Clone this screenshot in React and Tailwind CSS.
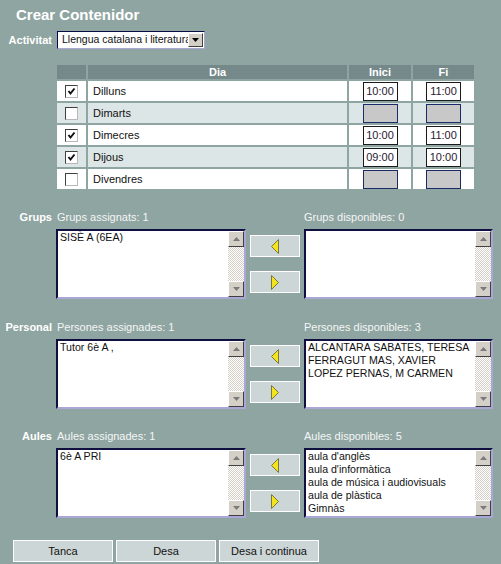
import React from "react"

const days = [
  { name: "Dilluns", on: true, start: "10:00", end: "11:00" },
  { name: "Dimarts", on: false },
  { name: "Dimecres", on: true, start: "10:00", end: "11:00" },
  { name: "Dijous", on: true, start: "09:00", end: "10:00" },
  { name: "Divendres", on: false },
]

const sections = [
  {
    label: "Grups",
    left: "Grups assignats: 1",
    right: "Grups disponibles: 0",
    assigned: ["SISÈ A (6EA)"],
    available: [],
    mt: "mt-[22px]",
  },
  {
    label: "Personal",
    left: "Persones assignades: 1",
    right: "Persones disponibles: 3",
    assigned: ["Tutor 6è A ,"],
    available: ["ALCANTARA SABATES, TERESA", "FERRAGUT MAS, XAVIER", "LOPEZ PERNAS, M CARMEN"],
    mt: "mt-[22px]",
  },
  {
    label: "Aules",
    left: "Aules assignades: 1",
    right: "Aules disponibles: 5",
    assigned: ["6è A PRI"],
    available: ["aula d'anglès", "aula d'informàtica", "aula de música i audiovisuals", "aula de plàstica", "Gimnàs"],
    mt: "mt-[21px]",
  },
]

function ScrollButton({ up }) {
  return (
    <div className="w-[16px] h-[16px] bg-[#d4d0c8] border border-t-white border-l-white border-b-[#404040] border-r-[#404040] flex items-center justify-center">
      <svg width="7" height="4" viewBox="0 0 7 4">
        {up ? <polygon points="3.5,0 7,4 0,4" fill="#7a7a7a" /> : <polygon points="0,0 7,0 3.5,4" fill="#7a7a7a" />}
      </svg>
    </div>
  )
}

function Listbox({ items }) {
  return (
    <div className="h-[70px] bg-white border-2 border-t-[#101040] border-l-[#101040] border-b-[#aaa6d6] border-r-[#aaa6d6] flex">
      <div className="flex-1 min-w-0 pl-[2px] text-[10.6px] leading-[13px] text-[#111] overflow-hidden whitespace-nowrap">
        {items.map((it) => (
          <div key={it}>{it}</div>
        ))}
      </div>
      <div className="w-[16px] flex flex-col">
        <ScrollButton up />
        <div className="flex-1 bg-[repeating-conic-gradient(#d4d0c8_0_25%,#ffffff_0_50%)] bg-size-[2px_2px]" />
        <ScrollButton />
      </div>
    </div>
  )
}

function ArrowButton({ left }) {
  return (
    <button className="w-[50px] h-[22px] bg-[#cdd6d6] border border-white flex items-center justify-center">
      <svg width="8" height="15" viewBox="0 0 8 15">
        {left ? (
          <polygon points="7.5,0.5 0.5,7.5 7.5,14.5" fill="#f4e41c" stroke="#7c7838" strokeWidth="1" />
        ) : (
          <polygon points="0.5,0.5 7.5,7.5 0.5,14.5" fill="#f4e41c" stroke="#7c7838" strokeWidth="1" />
        )}
      </svg>
    </button>
  )
}

function Checkbox({ on }) {
  return (
    <div className="w-[13px] h-[13px] bg-white border border-t-[#404040] border-l-[#404040] border-b-[#b8b8b8] border-r-[#b8b8b8] flex items-center justify-center">
      {on && (
        <svg width="9" height="9" viewBox="0 0 9 9">
          <polyline points="1.5,4 3.5,6.5 7.5,1.5" fill="none" stroke="#111" strokeWidth="2" />
        </svg>
      )}
    </div>
  )
}

function TimeInput({ value }) {
  if (!value) {
    return <div className="w-[35px] h-[19px] bg-[#c8c8c8] border border-[#1c2a6a]" />
  }
  return (
    <div className="w-[35px] h-[19px] bg-white border border-[#1a1a1a] text-[11px] leading-[17px] text-center text-[#2a1830]">
      {value}
    </div>
  )
}

export default function App() {
  return (
    <div className="w-[501px] h-[564px] bg-[#8fa5a1] font-['Liberation_Sans',Arial,sans-serif] text-[11px] overflow-hidden">
      <div className="pt-[6px] pl-[16px] text-[15px] leading-[18px] font-bold text-white">Crear Contenidor</div>

      <div className="mt-[7px] flex items-center gap-[5px]">
        <div className="w-[52px] text-right font-bold text-white">Activitat</div>
        <div className="w-[148px] h-[18px] bg-white border border-t-[#0a0a46] border-l-[#0a0a46] border-b-[#aaa6d6] border-r-[#aaa6d6] flex items-center">
          <div className="flex-1 min-w-0 pl-[4px] overflow-hidden whitespace-nowrap text-[10.5px] text-[#111]">
            Llengua catalana i literatura
          </div>
          <div className="w-[15px] h-[14px] mr-[1px] bg-[#d4d0c8] border border-t-white border-l-white border-b-[#404040] border-r-[#404040] flex items-center justify-center">
            <svg width="7" height="4" viewBox="0 0 7 4">
              <polygon points="0,0 7,0 3.5,4" fill="#000" />
            </svg>
          </div>
        </div>
      </div>

      <div className="mt-[16px] ml-[57px] grid grid-cols-[29px_259px_62px_61px] gap-[2px]">
        <div className="h-[14px] bg-[#75898a]" />
        <div className="h-[14px] bg-[#75898a] text-center font-bold text-white leading-[14px]">Dia</div>
        <div className="h-[14px] bg-[#75898a] text-center font-bold text-white leading-[14px]">Inici</div>
        <div className="h-[14px] bg-[#75898a] text-center font-bold text-white leading-[14px]">Fi</div>
        {days.map((d, i) => {
          const bg = i % 2 === 1 ? "bg-[#dde6e6]" : "bg-white"
          return (
            <React.Fragment key={d.name}>
              <div className={`h-[20px] ${bg} flex items-center justify-center`}>
                <Checkbox on={d.on} />
              </div>
              <div className={`h-[20px] ${bg} pl-[5px] leading-[20px] text-[#111]`}>{d.name}</div>
              <div className={`h-[20px] ${bg} flex items-center justify-center`}>
                <TimeInput value={d.start} />
              </div>
              <div className={`h-[20px] ${bg} flex items-center justify-center`}>
                <TimeInput value={d.end} />
              </div>
            </React.Fragment>
          )
        })}
      </div>

      {sections.map((s) => (
        <div key={s.label} className={`${s.mt} grid grid-cols-[52px_190px_50px_189px] gap-x-[4px]`}>
          <div className="text-right font-bold text-white leading-[13px]">{s.label}</div>
          <div className="pl-[1px] text-[#f4f6f6] leading-[13px]">{s.left}</div>
          <div />
          <div className="text-[#f4f6f6] leading-[13px]">{s.right}</div>

          <div className="mt-[5px]" />
          <div className="mt-[5px]">
            <Listbox items={s.assigned} />
          </div>
          <div className="mt-[5px] pt-[6px] flex flex-col gap-[14px]">
            <ArrowButton left />
            <ArrowButton />
          </div>
          <div className="mt-[5px]">
            <Listbox items={s.available} />
          </div>
        </div>
      ))}

      <div className="mt-[22px] ml-[13px] flex gap-[3px]">
        {["Tanca", "Desa", "Desa i continua"].map((b) => (
          <button key={b} className="w-[100px] h-[22px] bg-[#cdd6d6] border border-white text-[11px] text-[#111]">
            {b}
          </button>
        ))}
      </div>
    </div>
  )
}
